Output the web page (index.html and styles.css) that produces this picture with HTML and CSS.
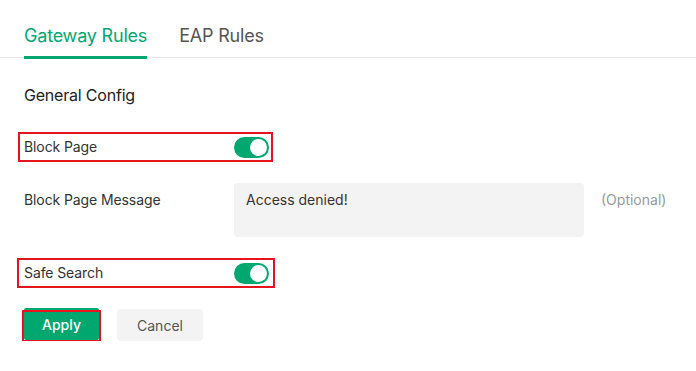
FILE: index.html
```html
<!DOCTYPE html>
<html>
<head>
<meta charset="utf-8">
<link rel="stylesheet" href="styles.css">
</head>
<body>
<div class="tabs">
  <div class="tab active">Gateway Rules</div>
  <div class="tab">EAP Rules</div>
</div>
<div class="content">
  <div class="section-title">General Config</div>
  <div class="row boxed boxed-a">
    <div class="label">Block Page</div>
    <div class="toggle"><span class="knob"></span></div>
  </div>
  <div class="row msg-row">
    <div class="label">Block Page Message</div>
    <div class="textarea">Access denied!</div>
    <div class="hint">(Optional)</div>
  </div>
  <div class="row boxed boxed-b">
    <div class="label">Safe Search</div>
    <div class="toggle"><span class="knob"></span></div>
  </div>
  <div class="actions">
    <div class="apply-wrap"><button class="btn btn-apply">Apply</button></div>
    <button class="btn btn-cancel">Cancel</button>
  </div>
</div>
</body>
</html>
```
FILE: styles.css
```css
* { box-sizing: border-box; }
body {
  margin: 0;
  font-family: Inter, "Noto Sans", sans-serif;
  color: #333;
  background: #fff;
}
.tabs {
  display: flex;
  gap: 32px;
  padding: 0 24px;
  border-bottom: 1px solid #e8e8e8;
}
.tab {
  font-size: 18px;
  line-height: 24px;
  padding: 24px 0 8px;
  color: #555;
  border-bottom: 3px solid transparent;
  margin-bottom: -2px;
  letter-spacing: -0.2px;
}
.tab.active {
  color: #00a870;
  border-bottom-color: #00a870;
}
.content {
  padding-top: 25px;
}
.section-title {
  font-size: 16px;
  line-height: 24px;
  padding-left: 24px;
  color: #222;
  font-weight: 400;
  letter-spacing: -0.2px;
}
.row {
  display: grid;
  grid-template-columns: 210px auto;
  align-items: center;
  font-size: 14px;
  line-height: 20px;
}
.label { color: #333; letter-spacing: -0.1px; }
.boxed {
  border: 2px solid #e5141f;
  width: max-content;
}
.boxed-a {
  margin: 25px 0 0 18px;
  height: 30px;
  padding: 0 2px 0 4px;
}
.boxed-b {
  margin: 21px 0 0 17px;
  height: 30px;
  padding: 0 4px 0 5px;
}
.toggle {
  width: 35px;
  height: 21px;
  border-radius: 11px;
  background: #00a870;
  display: flex;
  justify-content: flex-end;
  align-items: center;
  padding-right: 2px;
}
.knob {
  width: 17px;
  height: 17px;
  border-radius: 50%;
  background: #fff;
}
.msg-row {
  grid-template-columns: 210px 350px auto;
  align-items: start;
  margin-top: 21px;
  padding-left: 24px;
}
.msg-row .label { padding-top: 7px; }
.textarea {
  height: 54px;
  background: #f3f3f3;
  border-radius: 4px;
  padding: 7px 12px;
  color: #333;
}
.hint {
  padding: 7px 0 0 17px;
  color: #999;
}
.actions {
  display: flex;
  gap: 18px;
  padding-left: 24px;
  margin-top: 20px;
  align-items: flex-start;
}
.apply-wrap {
  position: relative;
}
.apply-wrap::after {
  content: "";
  position: absolute;
  left: -2px;
  right: -2px;
  top: 2px;
  bottom: -2px;
  border: 2px solid #e5141f;
  pointer-events: none;
}
.btn {
  font-family: Inter, "Noto Sans", sans-serif;
  font-size: 14px;
  border: none;
  border-radius: 2px;
  height: 32px;
  display: block;
  padding: 0;
}
.btn-apply {
  width: 75px;
  background: #00a870;
  color: #fff;
  font-weight: 500;
}
.btn-cancel {
  width: 86px;
  background: #f3f3f3;
  color: #555;
  margin-top: 1px;
  border-radius: 4px;
}
```
